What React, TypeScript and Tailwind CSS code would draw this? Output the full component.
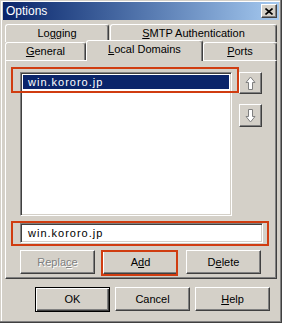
import React from 'react';

const raised =
  'border border-t-white border-l-white border-r-[#404040] border-b-[#404040] shadow-[inset_-1px_-1px_#808080] bg-[#d4d0c8]';
const sunken =
  'border border-t-[#808080] border-l-[#808080] border-r-white border-b-white shadow-[inset_1px_1px_#404040,inset_-1px_-1px_#d4d0c8] bg-white';

function Arrow({ down = false }: { down?: boolean }) {
  return (
    <svg width="11" height="15" viewBox="0 0 11 15" className={down ? 'rotate-180' : ''}>
      <path d="M5.5 1 L10 6.5 L7.5 6.5 L7.5 13.5 L3.5 13.5 L3.5 6.5 L1 6.5 Z" fill="white" stroke="#808080" strokeWidth="1" />
    </svg>
  );
}

function Tab({ w, children, active = false }: { w: string; children: React.ReactNode; active?: boolean }) {
  return (
    <div
      className={`${w} ${active ? 'h-[21px] -mb-px relative z-10 pb-[3px]' : 'h-[18px]'} flex items-center justify-center bg-[#d4d0c8] border-t border-l border-r border-t-white border-l-white border-r-[#404040] rounded-t-[3px] shadow-[inset_-1px_0_#808080]`}
    >
      {children}
    </div>
  );
}

function Btn({ w = 'w-[75px]', children, disabled = false, def = false }: { w?: string; children: React.ReactNode; disabled?: boolean; def?: boolean }) {
  const cls = def
    ? 'border border-black shadow-[inset_1px_1px_#fff,inset_-1px_-1px_#404040,inset_-2px_-2px_#808080] bg-[#d4d0c8] h-[25px]'
    : `${raised} h-[24px]`;
  return (
    <div className={`${w} ${cls} flex items-center justify-center ${disabled ? 'text-[#808080] [text-shadow:1px_1px_#fff]' : 'text-black'}`}>
      {children}
    </div>
  );
}

export default function App() {
  return (
    <div className="relative w-[282px] h-[323px] bg-[#d4d0c8] p-[3px] pt-[2px] font-['Liberation_Sans',Arial,sans-serif] text-[11px] text-black shadow-[inset_-1px_-1px_#404040,inset_-2px_-2px_#808080,inset_1px_1px_#d4d0c8,inset_2px_2px_#fff]">
      <div className="h-[18px] bg-gradient-to-r from-[#0a246a] to-[#a6caf0] flex items-center justify-between pl-[3px] pr-[2px]">
        <span className="text-white text-[12px] leading-none">Options</span>
        <div className={`${raised} w-[16px] h-[14px] flex items-center justify-center`}>
          <svg width="8" height="7" viewBox="0 0 8 7">
            <path d="M0.5 0.5 L7.5 6.5 M7.5 0.5 L0.5 6.5" stroke="black" strokeWidth="1.6" />
          </svg>
        </div>
      </div>

      <div className="mx-[2px] mt-[4px]">
        <div className="flex gap-px">
          <Tab w="w-[104px]">
            <span>Lo<u>g</u>ging</span>
          </Tab>
          <Tab w="w-[167px]">
            <span><u>S</u>MTP Authentication</span>
          </Tab>
        </div>
        <div className="flex items-end h-[18px]">
          <Tab w="w-[81px]">
            <span><u>G</u>eneral</span>
          </Tab>
          <Tab w="w-[117px]" active>
            <span><u>L</u>ocal Domains</span>
          </Tab>
          <Tab w="w-[74px]">
            <span><u>P</u>orts</span>
          </Tab>
        </div>

        <div className="h-[219px] border border-t-white border-l-white border-r-[#404040] border-b-[#404040] shadow-[inset_-1px_-1px_#808080] pt-[11px] pl-[14px]">
          <div className="flex">
            <div className={`${sunken} w-[212px] h-[144px] p-[2px]`}>
              <div className="h-[14px] bg-[#0a246a] text-white flex items-center pl-[5px] tracking-[1px]">win.kororo.jp</div>
            </div>
            <div className="ml-[7px] flex flex-col gap-[10px]">
              <div className={`${raised} w-[23px] h-[22px] flex items-center justify-center`}>
                <Arrow />
              </div>
              <div className={`${raised} w-[23px] h-[23px] flex items-center justify-center`}>
                <Arrow down />
              </div>
            </div>
          </div>

          <div className={`${sunken} mt-[7px] w-[243px] h-[20px] flex items-center pl-[7px] tracking-[1px]`}>win.kororo.jp</div>

          <div className="mt-[7px] w-[241px] flex justify-between">
            <Btn disabled>
              <span>Repla<u>c</u>e</span>
            </Btn>
            <Btn>
              <span>A<u>d</u>d</span>
            </Btn>
            <Btn>
              <span>D<u>e</u>lete</span>
            </Btn>
          </div>
        </div>
      </div>

      <div className="mt-[8px] flex justify-end gap-[5px] pr-[9px]">
        <Btn def>OK</Btn>
        <Btn>Cancel</Btn>
        <Btn>
          <span><u>H</u>elp</span>
        </Btn>
      </div>

      <div className="absolute left-[11px] top-[67px] w-[228px] h-[26px] border-2 border-[#d03c10]" />
      <div className="absolute left-[11px] top-[221px] w-[258px] h-[25px] border-2 border-[#d03c10]" />
      <div className="absolute left-[101px] top-[250px] w-[77px] h-[26px] border-2 border-[#d03c10]" />
    </div>
  );
}
